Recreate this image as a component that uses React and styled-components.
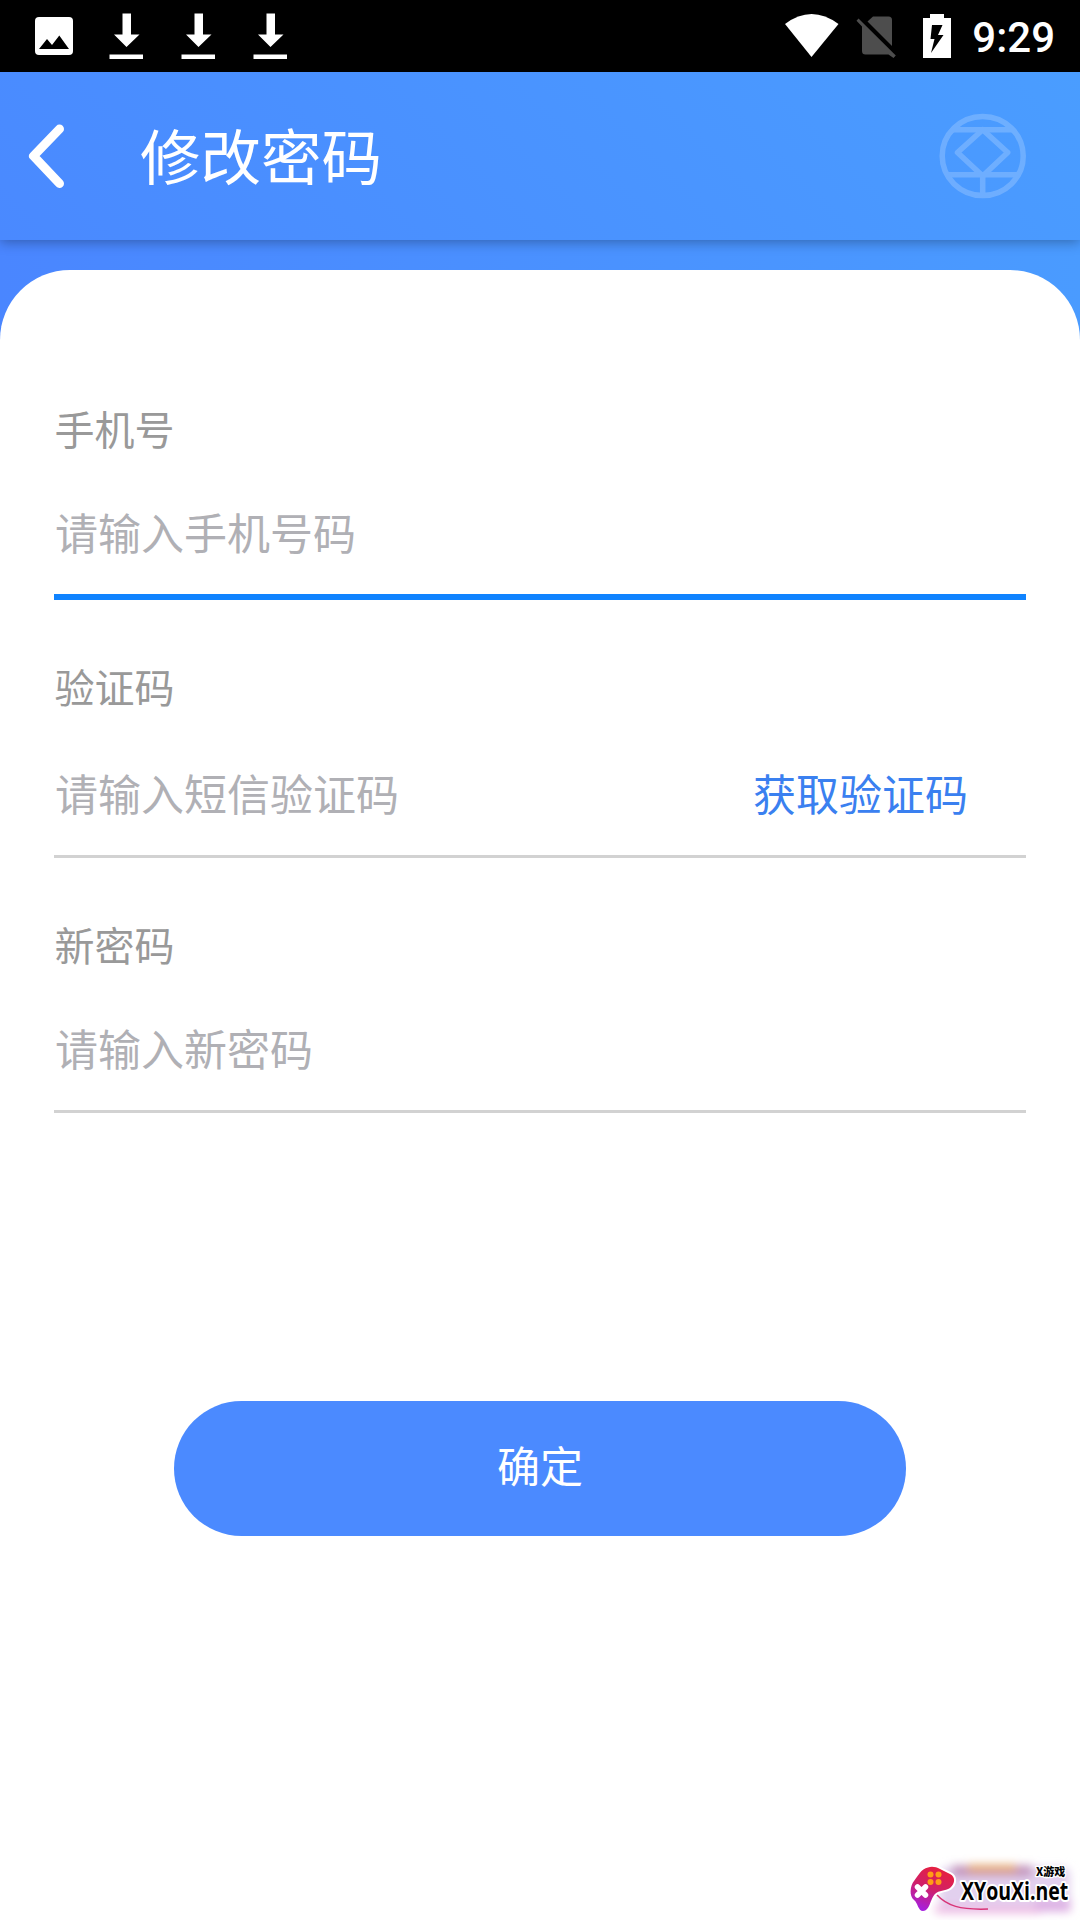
import React from "react";
import styled, { createGlobalStyle } from "styled-components";

const GlobalStyle = createGlobalStyle`
  * {
    box-sizing: border-box;
  }

  body {
    margin: 0;
    background-color: #fff;
    font-family: Roboto, "Noto Sans CJK SC", sans-serif;
  }
`;

const Screen = styled.div`
  position: relative;
  display: flex;
  flex-direction: column;
  width: 1080px;
  height: 1920px;
  overflow: hidden;
`;

const StatusBar = styled.div`
  display: flex;
  flex: none;
  justify-content: space-between;
  height: 72px;
  padding: 0 25px 0 18px;
  background-color: #000;
`;

const StatusGroup = styled.div`
  display: flex;
  align-items: center;
`;

const StatusIcon = styled.svg`
  display: block;
  width: ${props => props.$width || 72}px;
  height: 72px;
`;

const Clock = styled.span`
  color: #fff;
  font-size: 42px;
  font-weight: 500;
  line-height: 72px;
  padding-top: 3px;
`;

const Header = styled.div`
  position: relative;
  z-index: 1;
  display: flex;
  flex: none;
  align-items: center;
  height: 168px;
  background-image: linear-gradient(45deg, #4a89ff, #4a9dff);
  box-shadow: 0 2px 12px rgba(0, 0, 0, 0.32);
`;

const BackIcon = styled.svg`
  width: 96px;
  height: 168px;
`;

const Title = styled.h1`
  flex: 1;
  margin: 0;
  padding: 8px 0 0 44px;
  color: #fff;
  font-size: 60.5px;
  font-weight: 400;
  line-height: 88px;
`;

const Emblem = styled.svg`
  width: 90px;
  height: 168px;
  margin-right: 52px;
`;

const Body = styled.div`
  flex: 1;
  padding-top: 30px;
  background-image: linear-gradient(90deg, #4a86ff, #4a9bff);
`;

const Card = styled.div`
  display: flex;
  flex-direction: column;
  height: 100%;
  padding: 132px 54px 0;
  border-radius: 70px 70px 0 0;
  background-color: #fff;
`;

const Field = styled.div`
  display: flex;
  flex-direction: column;
  height: ${props => props.$height}px;
  margin-bottom: 60px;
  border-bottom: ${props => (props.$active ? "6px solid #0f83ff" : "3px solid #d2d2d2")};
`;

const Label = styled.div`
  padding-left: 0.5px;
  color: #999;
  font-size: 40px;
  line-height: 60px;
`;

const InputRow = styled.div`
  display: flex;
  flex: 1;
  justify-content: space-between;
  margin-top: ${props => props.$gap}px;
  padding: 0 58px 0 1px;
  font-size: 43px;
  line-height: 64px;
`;

const Placeholder = styled.span`
  color: #b0b0b5;
`;

const CodeLink = styled.a`
  color: #3a80f0;
`;

const SubmitButton = styled.button`
  align-self: center;
  width: 732px;
  height: 135px;
  margin-top: 228px;
  padding: 0 0 10px;
  border: 0;
  border-radius: 68px;
  background-color: #4b8aff;
  color: #fff;
  font-family: inherit;
  font-size: 43px;
`;

const Watermark = styled.svg`
  position: absolute;
  right: 0;
  bottom: 0;
  width: 190px;
  height: 70px;
`;

const fields = [
  { label: "手机号", placeholder: "请输入手机号码", height: 198, gap: 41, active: true },
  { label: "验证码", placeholder: "请输入短信验证码", height: 198, gap: 44, action: "获取验证码" },
  { label: "新密码", placeholder: "请输入新密码", height: 195, gap: 41 }
];

function DownloadIcon() {
  return (
    <StatusIcon viewBox="0 0 72 72" fill="#fff">
      <path d="M32.5 13.500h8.500v21h8.500L36.500 47 24 34.500h8.500zM19.500 54.500h33.500v4.500H19.500z" />
    </StatusIcon>
  );
}

function Status() {
  return (
    <StatusBar>
      <StatusGroup>
        <StatusIcon viewBox="18 0 72 72">
          <rect x="35" y="17" width="38" height="38" rx="4" fill="#fff" />
          <path d="M39 49l8-10 5 6 7.3-9.5L69 49z" fill="#000" />
        </StatusIcon>
        <DownloadIcon />
        <DownloadIcon />
        <DownloadIcon />
      </StatusGroup>
      <StatusGroup>
        <StatusIcon $width={72} viewBox="774 0 72 72">
          <path d="M785 24Q811.500 4 838.500 24L811.500 57z" fill="#fff" />
        </StatusIcon>
        <StatusIcon $width={66} viewBox="846 0 66 72" fill="#4d4d4d">
          <path d="M873 16.500h15.500q3.500 0 3.500 3.500v26L867.500 21.500z" />
          <path d="M858.500 18.500L856.500 20.800L862 26.500V51q0 3.500 3.500 3.500H888.500L893.500 58L895.800 55.500z" />
        </StatusIcon>
        <StatusIcon $width={60} viewBox="912 0 60 72">
          <path d="M923 18h7v-4h14v4h7v40h-28z" fill="#fff" />
          <path d="M932 25h10.500l-4.500 10h5.500L931 53l3.500-14h-4z" fill="#000" />
        </StatusIcon>
        <Clock>9:29</Clock>
      </StatusGroup>
    </StatusBar>
  );
}

function Logo() {
  return (
    <Watermark viewBox="0 0 190 70">
      <defs>
        <linearGradient id="pad" x1="0.7" y1="0" x2="0.3" y2="1">
          <stop offset="0" stopColor="#e8203c" />
          <stop offset="0.5" stopColor="#d02068" />
          <stop offset="1" stopColor="#a51fe0" />
        </linearGradient>
        <filter id="haze" x="-20%" y="-50%" width="140%" height="200%">
          <feGaussianBlur stdDeviation="4.500" />
        </filter>
      </defs>
      <g filter="url(#haze)">
        <rect x="50" y="17" width="130" height="44" rx="8" fill="#e2d0ee" />
        <rect x="62" y="15" width="80" height="12" fill="#b880ab" opacity="0.7" />
        <rect x="78" y="14" width="48" height="9" fill="#efb267" opacity="0.7" />
        <rect x="45" y="55" width="105" height="9" fill="#edb8e2" opacity="0.8" />
        <rect x="146" y="50" width="35" height="12" fill="#dca4df" opacity="0.7" />
      </g>
      <path d="M46 44C57 56 70 60 98 59" fill="none" stroke="#d83578" strokeWidth="1.500" />
      <path
        d="M38 17.500C42 16 46 17 50 19L60 24C66 27 65 34 60 38C55 41 49 40 45 44C40 49 40 61 33 61C28 61 28 53 24 50C19 46 20 36 24 31C28 26 31 19 38 17.500z"
        fill="url(#pad)"
        stroke="#fff"
        strokeWidth="4"
        paintOrder="stroke"
      />
      <g fill="#ff9d16">
        <circle cx="40.500" cy="24.500" r="3" />
        <circle cx="48.500" cy="24.500" r="3" />
        <circle cx="40.500" cy="32" r="3" />
        <circle cx="48.500" cy="32" r="3" />
      </g>
      <path d="M27.500 37l8 8M35.500 37l-8 8" stroke="#fff" strokeWidth="5.500" strokeLinecap="round" />
      <g fill="#000" stroke="#fff" strokeLinejoin="round" paintOrder="stroke">
        <text
          x="146"
          y="26"
          fontFamily="'Noto Sans CJK SC', sans-serif"
          fontSize="11"
          fontWeight="900"
          strokeWidth="2.500"
        >
          X游戏
        </text>
        <text
          transform="translate(71 50) scale(0.78 1)"
          fontFamily="'Open Sans', sans-serif"
          fontSize="25"
          fontWeight="700"
          strokeWidth="4"
        >
          XYouXi.net
        </text>
      </g>
    </Watermark>
  );
}

export default function App() {
  return (
    <Screen>
      <GlobalStyle />
      <Status />
      <Header>
        <BackIcon viewBox="0 72 96 168">
          <path
            d="M59.500 129L33.500 156l26 27.500"
            fill="none"
            stroke="#fff"
            strokeWidth="9"
            strokeLinecap="round"
            strokeLinejoin="round"
          />
        </BackIcon>
        <Title>修改密码</Title>
        <Emblem viewBox="938 72 90 168" fill="none" stroke="#fff" strokeWidth="5.500" opacity="0.2">
          <ellipse cx="982.700" cy="156" rx="40.500" ry="39.500" />
          <path d="M952 129.700h61M947 174.700h71M982.700 175v19" />
          <path d="M982.700 129.700L957.500 152.500l25.200 23.500l25-23.500z" strokeLinejoin="round" />
        </Emblem>
      </Header>
      <Body>
        <Card>
          {fields.map(field => (
            <Field key={field.label} $height={field.height} $active={field.active}>
              <Label>{field.label}</Label>
              <InputRow $gap={field.gap}>
                <Placeholder>{field.placeholder}</Placeholder>
                {field.action && <CodeLink>{field.action}</CodeLink>}
              </InputRow>
            </Field>
          ))}
          <SubmitButton>确定</SubmitButton>
        </Card>
      </Body>
      <Logo />
    </Screen>
  );
}
